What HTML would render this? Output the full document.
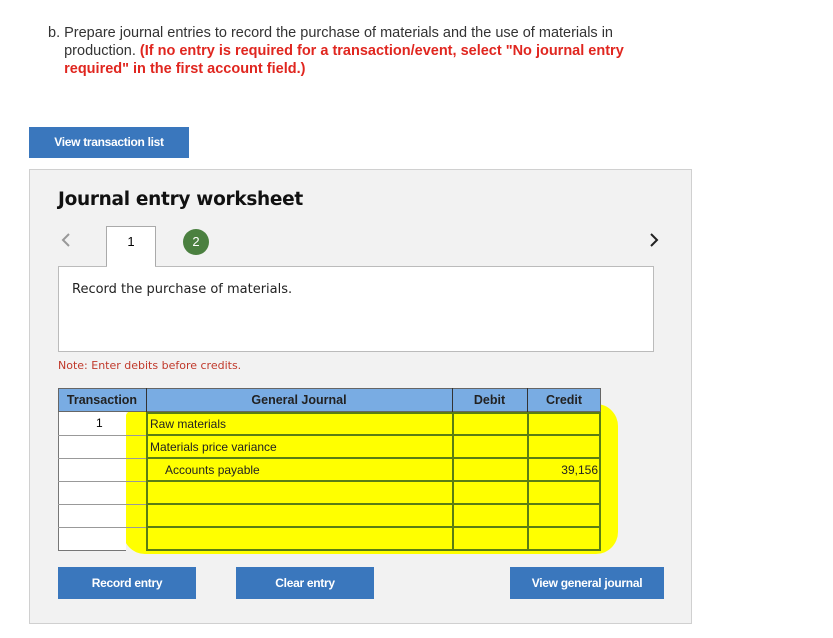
<!DOCTYPE html>
<html><head><meta charset="utf-8"><style>
body{margin:0;width:833px;height:638px;background:#fff;font-family:"Liberation Sans",Arial,sans-serif;position:relative;overflow:hidden}
.a{position:absolute}
.q{left:48px;top:24px;font-size:14.5px;color:#333;line-height:18px;width:640px}
.red{color:#e0261f;font-weight:bold}
.btn{background:#3a77bd;color:#fff;font-weight:bold;font-size:12px;text-align:center;letter-spacing:-0.3px}
.panel{left:29px;top:169px;width:663px;height:455px;background:#f2f2f2;border:1px solid #d0d0d0;box-sizing:border-box}
.h{top:388px;line-height:24px;text-align:center;font-size:12.5px;color:#222;font-weight:bold}
</style></head><body>
<div class="a q">b. Prepare journal entries to record the purchase of materials and the use of materials in<br>&nbsp;&nbsp;&nbsp;&nbsp;production. <span class="red">(If no entry is required for a transaction/event, select "No journal entry<br>&nbsp;&nbsp;&nbsp;&nbsp;required" in the first account field.)</span></div>
<div class="a btn" style="left:29px;top:127px;width:160px;height:31px;line-height:31px">View transaction list</div>
<div class="a panel"></div>
<div class="a" style="left:58px;top:189px;font-size:18.5px;font-weight:bold;color:#111;font-family:'DejaVu Sans',sans-serif;letter-spacing:-0.3px">Journal entry worksheet</div>
<svg class="a" style="left:60px;top:232px" width="12" height="16"><path d="M9 2 L3 8 L9 14" stroke="#999" stroke-width="2" fill="none"/></svg>
<svg class="a" style="left:648px;top:232px" width="12" height="16"><path d="M3 2 L9 8 L3 14" stroke="#222" stroke-width="2" fill="none"/></svg>
<div class="a" style="left:106px;top:226px;width:50px;height:41px;background:#fff;border:1px solid #aaa;border-bottom:none;box-sizing:border-box;text-align:center;line-height:30px;font-size:13px">1</div>
<div class="a" style="left:183px;top:229px;width:26px;height:26px;border-radius:50%;background:#4b8040;color:#fff;text-align:center;line-height:26px;font-size:13px">2</div>
<div class="a" style="left:58px;top:266px;width:596px;height:86px;background:#fff;border:1px solid #bbb;box-sizing:border-box"></div>
<div class="a" style="left:107px;top:265px;width:48px;height:2px;background:#fff"></div>
<div class="a" style="left:72px;top:282px;font-size:13px;color:#222;font-family:'DejaVu Sans',sans-serif">Record the purchase of materials.</div>
<div class="a" style="left:58px;top:359px;font-size:11px;color:#c0392b;font-family:'DejaVu Sans',sans-serif">Note: Enter debits before credits.</div>
<div class="a" style="left:123px;top:404px;width:495px;height:150px;background:#ffff00;border-radius:22px"></div>
<div class="a" style="left:58px;top:388px;width:543px;height:24px;background:#79ace3;border:1px solid #666;box-sizing:border-box"></div>
<div class="a h" style="left:58px;width:88px">Transaction</div>
<div class="a h" style="left:146px;width:306px">General Journal</div>
<div class="a h" style="left:452px;width:75px">Debit</div>
<div class="a h" style="left:527px;width:74px">Credit</div>
<div class="a" style="left:146px;top:388px;width:1px;height:24px;background:#333"></div>
<div class="a" style="left:452px;top:388px;width:1px;height:24px;background:#333"></div>
<div class="a" style="left:527px;top:388px;width:1px;height:24px;background:#333"></div>
<div class="a" style="left:58px;top:412px;width:67px;height:138px;background:#fff;border-left:1px solid #777;border-bottom:1px solid #777"></div>
<div class="a" style="left:58px;top:435px;width:88px;height:1px;background:#999"></div>
<div class="a" style="left:58px;top:458px;width:88px;height:1px;background:#999"></div>
<div class="a" style="left:58px;top:481px;width:88px;height:1px;background:#999"></div>
<div class="a" style="left:58px;top:504px;width:88px;height:1px;background:#999"></div>
<div class="a" style="left:58px;top:527px;width:88px;height:1px;background:#999"></div>
<div class="a" style="left:96px;top:416px;font-size:12px">1</div>
<div class="a" style="left:146px;top:412px;width:455px;height:139px;border:2px solid #5a7d14;box-sizing:border-box"></div>
<div class="a" style="left:452px;top:412px;width:2px;height:138px;background:#5a7d14"></div>
<div class="a" style="left:527px;top:412px;width:2px;height:138px;background:#5a7d14"></div>
<div class="a" style="left:146px;top:434px;width:455px;height:2px;background:#5a7d14"></div>
<div class="a" style="left:146px;top:457px;width:455px;height:2px;background:#5a7d14"></div>
<div class="a" style="left:146px;top:480px;width:455px;height:2px;background:#5a7d14"></div>
<div class="a" style="left:146px;top:503px;width:455px;height:2px;background:#5a7d14"></div>
<div class="a" style="left:146px;top:526px;width:455px;height:2px;background:#5a7d14"></div>
<div class="a" style="left:150px;top:417px;font-size:12px;color:#222">Raw materials</div>
<div class="a" style="left:150px;top:440px;font-size:12px;color:#222">Materials price variance</div>
<div class="a" style="left:165px;top:463px;font-size:12px;color:#222">Accounts payable</div>
<div class="a" style="left:540px;top:463px;width:58px;text-align:right;font-size:12px;color:#222">39,156</div>
<div class="a btn" style="left:58px;top:567px;width:138px;height:32px;line-height:32px">Record entry</div>
<div class="a btn" style="left:236px;top:567px;width:138px;height:32px;line-height:32px">Clear entry</div>
<div class="a btn" style="left:510px;top:567px;width:154px;height:32px;line-height:32px">View general journal</div>
</body></html>
